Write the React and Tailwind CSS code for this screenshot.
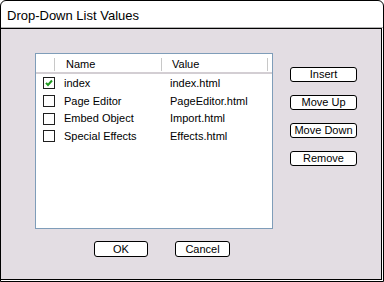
import React from 'react'

const rows = [
    { name: 'index', value: 'index.html', checked: true },
    { name: 'Page Editor', value: 'PageEditor.html', checked: false },
    { name: 'Embed Object', value: 'Import.html', checked: false },
    { name: 'Special Effects', value: 'Effects.html', checked: false },
]

const DialogButton = ({ label, className = '' }) => (
    <button
        className={`flex items-center justify-center bg-white border border-black rounded-[3px] text-[11px] leading-none text-black ${className}`}
    >
        {label}
    </button>
)

const CheckBox = ({ checked }) => (
    <div className="w-[12px] h-[12px] border border-[#1f1f1f] bg-white flex items-center justify-center">
        {checked && (
            <svg width="8" height="8" viewBox="0 0 8 8">
                <path d="M1 3.8 L3 6 L7 1.5" stroke="#1f9a1f" strokeWidth="2" fill="none" />
            </svg>
        )}
    </div>
)

const App = () => {
    return (
        <div
            className="w-[384px] h-[282px] bg-white border border-black rounded-t-[6px] flex flex-col overflow-hidden text-black"
            style={{ fontFamily: '"Liberation Sans", Arial, sans-serif' }}
        >
            <div className="h-[27px] shrink-0 border-b border-[#b4b4b4] flex items-center pl-[6px] pt-[4px] text-[13px]">
                Drop-Down List Values
            </div>

            <div className="flex-1 mr-px mb-px border-t border-r border-b border-black bg-[#e3dde3] flex pl-[34px] pt-[24px]">
                <div className="flex flex-col">
                    <div className="w-[238px] h-[176px] border border-[#7f9db9] bg-white text-[11px]">
                        <div className="h-[18px] flex items-center pt-[3px]">
                            <div className="w-[19px] h-full flex items-center justify-end">
                                <div className="w-px h-[13px] bg-[#c8c8c8]" />
                            </div>
                            <div className="w-[107px] h-full flex items-center justify-between">
                                <span className="pl-[11px]">Name</span>
                                <div className="w-px h-[13px] bg-[#c8c8c8]" />
                            </div>
                            <div className="w-[106px] h-full flex items-center justify-between">
                                <span className="pl-[10px]">Value</span>
                                <div className="w-px h-[13px] bg-[#c8c8c8]" />
                            </div>
                        </div>
                        <div className="h-[2px] bg-[#d3ced3]" />
                        {rows.map((row) => (
                            <div key={row.name} className="h-[17.7px] flex items-center pt-px">
                                <div className="w-[28px] pl-[7px]">
                                    <CheckBox checked={row.checked} />
                                </div>
                                <div className="w-[106px]">{row.name}</div>
                                <div>{row.value}</div>
                            </div>
                        ))}
                    </div>

                    <div className="flex mt-[12px] pl-[59px] gap-[27px]">
                        <DialogButton label="OK" className="w-[54px] h-[16px]" />
                        <DialogButton label="Cancel" className="w-[55px] h-[16px]" />
                    </div>
                </div>

                <div className="flex flex-col gap-[13px] ml-[17px] mt-[14px]">
                    <DialogButton label="Insert" className="w-[67px] h-[15px]" />
                    <DialogButton label="Move Up" className="w-[67px] h-[15px]" />
                    <DialogButton label="Move Down" className="w-[67px] h-[15px]" />
                    <DialogButton label="Remove" className="w-[67px] h-[15px]" />
                </div>
            </div>
        </div>
    )
}

export default App
